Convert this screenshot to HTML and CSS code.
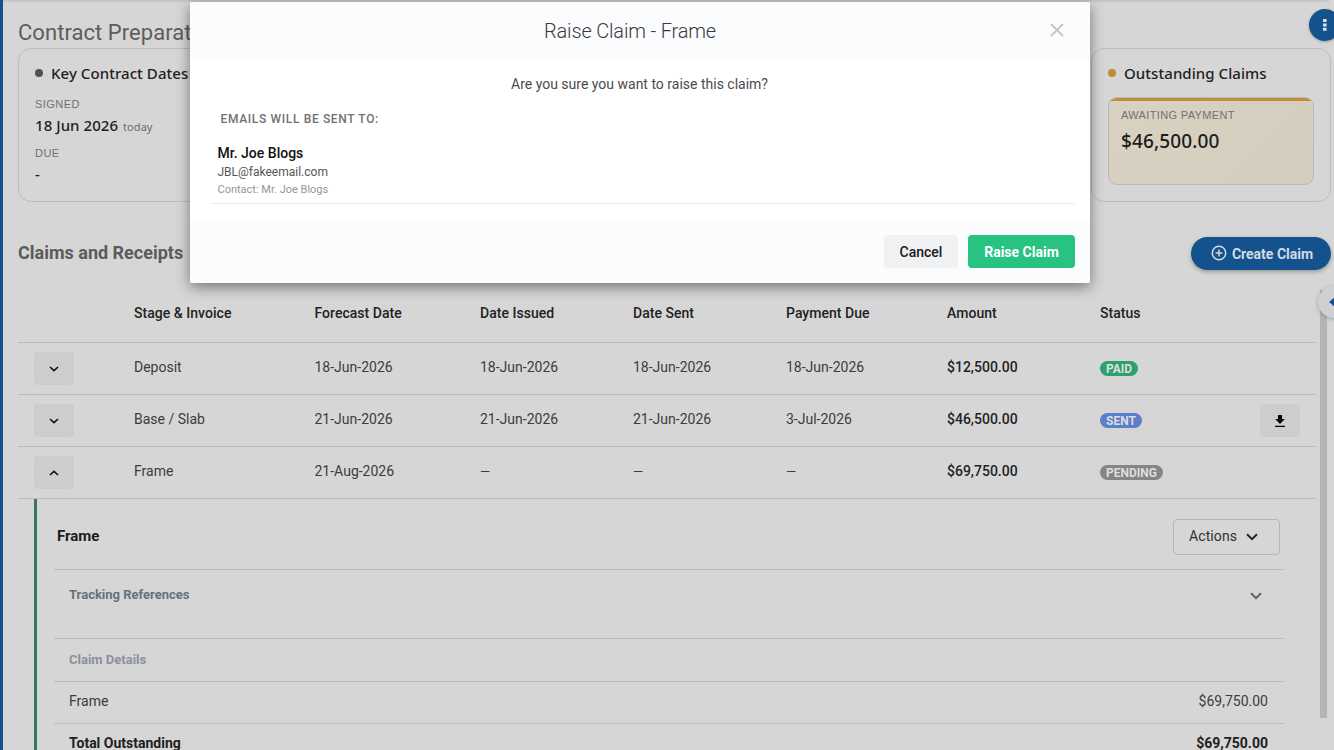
FILE: index.html
```html
<!DOCTYPE html>
<html lang="en">
<head>
<meta charset="utf-8">
<title>Raise Claim</title>
<link rel="stylesheet" href="styles.css">
</head>
<body>
<div class="page">
  <h1 class="page-title">Contract Preparation</h1>
  <section class="cards">
    <div class="card">
      <h2 class="card-title"><span class="dot dot-grey"></span>Key Contract Dates</h2>
      <div class="label">SIGNED</div>
      <div class="date">18 Jun 2026 <small>today</small></div>
      <div class="label label-due">DUE</div>
      <div class="date">-</div>
    </div>
    <div class="card"></div>
    <div class="card">
      <h2 class="card-title"><span class="dot dot-amber"></span>Outstanding Claims</h2>
      <div class="awaiting">
        <div class="label">AWAITING PAYMENT</div>
        <div class="total">$46,500.00</div>
      </div>
    </div>
  </section>

  <section class="claims-head">
    <h2>Claims and Receipts</h2>
    <button class="create"><svg width="16" height="16" viewBox="0 0 16 16" fill="none" stroke="currentColor" stroke-width="1.5"><circle cx="8" cy="8" r="6.7"/><path d="M8 4.6v6.8M4.6 8h6.8"/></svg>Create Claim</button>
  </section>

  <section class="table">
    <div class="row head"><span></span><span>Stage &amp; Invoice</span><span>Forecast Date</span><span>Date Issued</span><span>Date Sent</span><span>Payment Due</span><span>Amount</span><span>Status</span><span></span></div>
    <div class="row"><button class="square"><svg width="10" height="6" viewBox="0 0 10 6"><path d="M1 1l4 3.6L9 1"/></svg></button><span>Deposit</span><span>18-Jun-2026</span><span>18-Jun-2026</span><span>18-Jun-2026</span><span>18-Jun-2026</span><span class="amount">$12,500.00</span><span class="badge paid">PAID</span><span></span></div>
    <div class="row"><button class="square"><svg width="10" height="6" viewBox="0 0 10 6"><path d="M1 1l4 3.6L9 1"/></svg></button><span>Base / Slab</span><span>21-Jun-2026</span><span>21-Jun-2026</span><span>21-Jun-2026</span><span>3-Jul-2026</span><span class="amount">$46,500.00</span><span class="badge sent">SENT</span><button class="square download"><svg width="10" height="12" viewBox="0 0 10 12"><path d="M3 0h4v4h2.8L5 9 .2 4H3zM0 10.8h10V12H0z"/></svg></button></div>
    <div class="row"><button class="square"><svg width="10" height="6" viewBox="0 0 10 6"><path d="M1 5l4-3.6L9 5"/></svg></button><span>Frame</span><span>21-Aug-2026</span><span class="dash">—</span><span class="dash">—</span><span class="dash">—</span><span class="amount">$69,750.00</span><span class="badge pending">PENDING</span><span></span></div>
  </section>

  <section class="detail">
    <div class="detail-head"><h3>Frame</h3><button class="actions">Actions<svg width="12" height="8" viewBox="0 0 12 8"><path d="M1 1.2l5 5 5-5"/></svg></button></div>
    <div class="line tracking"><span>Tracking References</span><svg width="12" height="8" viewBox="0 0 12 8"><path d="M1 1.2l5 5 5-5"/></svg></div>
    <div class="line subhead">Claim Details</div>
    <div class="line item"><span>Frame</span><span>$69,750.00</span></div>
    <div class="line item sum"><span>Total Outstanding</span><span>$69,750.00</span></div>
  </section>

  <div class="top-shade"></div>
  <div class="scrollbar"></div>
  <button class="more"><svg width="4" height="12" viewBox="0 0 4 12"><path d="M0 0h3.6v3H0zM0 4.4h3.6v3H0zM0 8.8h3.6v3H0z"/></svg></button>
  <button class="drawer"><svg width="10" height="12" viewBox="0 0 10 12"><path d="M0 6l6-5v3h4v4H6v3z"/></svg></button>
</div>

<div class="modal" role="dialog">
  <header class="modal-head"><h2>Raise Claim - Frame</h2><svg class="close" width="14" height="14" viewBox="0 0 14 14"><path d="M1 1l12 12M13 1L1 13"/></svg></header>
  <div class="modal-body">
    <p class="question">Are you sure you want to raise this claim?</p>
    <div class="emails-title">EMAILS WILL BE SENT TO:</div>
    <div class="recipient">
      <div class="name">Mr. Joe Blogs</div>
      <div class="email">JBL@fakeemail.com</div>
      <div class="contact">Contact: Mr. Joe Blogs</div>
    </div>
  </div>
  <footer class="modal-foot"><button class="cancel">Cancel</button><button class="raise">Raise Claim</button></footer>
</div>
</body>
</html>
```

FILE: styles.css
```css
* { box-sizing: border-box; }
body { margin: 0; font-family: Roboto, sans-serif; font-size: 14px; color: #3c3c3e; background: #d6d6d6; overflow: hidden; }
h1, h2, h3, p { margin: 0; }
button { font-family: inherit; border: 0; padding: 0; }
svg { display: block; flex: none; }

.page { position: relative; height: 750px; overflow: hidden; padding: 16px 0 0 15px; border-left: 3px solid #14528e; }
.page-title { height: 32px; line-height: 34px; font-size: 22px; font-weight: 400; color: #5d5d5d; letter-spacing: .05px; }

.cards { display: grid; grid-template-columns: 524px 523px 240px; gap: 13px; height: 154px; width: 1313px; }
.card { border: 1px solid #bcbcbe; border-radius: 13px; padding: 12px 16px; }
.card-title { display: flex; align-items: center; gap: 8px; height: 24px; font: 500 15px/24px "Noto Sans", sans-serif; letter-spacing: .06px; color: #1f2022; white-space: nowrap; }
.dot { width: 8px; height: 8px; border-radius: 50%; }
.dot-grey { background: #505052; }
.dot-amber { background: #c48a30; }
.label { font: 400 11px/14px "Liberation Sans", sans-serif; letter-spacing: .35px; color: #707072; }
.card > .label { margin-top: 12px; letter-spacing: .45px; }
.card > .label-due { margin-top: 10px; }
.date { margin-top: 3px; height: 22px; font: 500 15px/22px "Noto Sans", sans-serif; letter-spacing: .06px; color: #1f2022; }
.date small { font-size: 11px; font-weight: 400; color: #6c6c6e; margin-left: 1px; }
.awaiting { position: relative; overflow: hidden; margin-top: 12px; height: 88px; padding: 10px 12px; border: 1px solid #bcbab5; border-radius: 9px; background: linear-gradient(135deg, #d9d1c2, #d4cebf); }
.awaiting::before { content: ""; position: absolute; top: -1px; left: 0; right: 0; height: 4px; background: #c08d3c; }
.total { margin-top: 6px; font: 500 19px/27px "Noto Sans", sans-serif; letter-spacing: .13px; color: #1c1c1d; }

.claims-head { display: flex; justify-content: space-between; align-items: center; width: 1313px; height: 33px; margin-top: 35px; }
.claims-head h2 { font-size: 18px; line-height: 32px; padding-bottom: 2px; font-weight: 700; color: #5b5b5b; }
.create { display: flex; align-items: center; justify-content: center; gap: 5px; width: 140px; height: 33px; padding-left: 2px; border-radius: 17px; background: #14528e; color: #d5dbe2; font-size: 14px; font-weight: 700; box-shadow: 0 2px 4px rgba(0,0,0,.28); }
.create svg { margin-bottom: 2px; }

.table { width: 1298px; margin-top: 14px; }
.row { display: grid; grid-template-columns: 116px 180.5px 165.5px 153px 153px 161px 153px 126px 1fr; align-items: center; height: 52px; padding-bottom: 3px; border-bottom: 1px solid #bcbcbe; }
.head { height: 59px; padding-bottom: 0; font-weight: 500; letter-spacing: .03px; color: #222224; }
.square { display: flex; align-items: center; justify-content: center; width: 40px; height: 33px; margin: 3px 0 0 16px; border-radius: 3px; background: #cdcdce; }
.square path { fill: none; stroke: #111; stroke-width: 1.6; }
.square.download { margin-left: 34px; }
.download path { fill: #050505; stroke: none; }
.amount { font-weight: 500; color: #222224; }
.dash { font-size: 13px; }
.badge { justify-self: start; height: 15px; margin-top: 3px; padding: 0 6px; border-radius: 8px; font-size: 12px; line-height: 16px; font-weight: 700; color: #dcdedf; }
.paid { background: #2aa16f; }
.sent { background: #5c7fca; }
.pending { background: #858585; }

.detail { width: 1250px; height: 260px; margin-left: 16px; padding-left: 17px; border-left: 3px solid #367660; }
.detail-head { display: flex; justify-content: space-between; align-items: center; height: 70px; padding: 5px 4px 0 3px; }
.detail-head h3 { font-size: 15px; line-height: 18px; padding-bottom: 1px; font-weight: 700; color: #1c1c1e; }
.actions { display: flex; align-items: center; gap: 9px; width: 107px; height: 36px; padding: 0 0 1px 15px; border: 1px solid #b5b5b8; border-radius: 4px; background: transparent; color: #303032; font-size: 14px; letter-spacing: .1px; }
.actions path, .tracking path { fill: none; stroke: #242426; stroke-width: 2; }
.actions svg { margin-top: 2px; }
.tracking path { stroke: #586370; }
.line { border-top: 1px solid #bcbcbe; padding: 0 16px 0 15px; }
.tracking { display: flex; justify-content: space-between; align-items: flex-start; height: 69px; padding-top: 17px; padding-right: 22px; font-size: 13px; line-height: 15px; font-weight: 700; color: #66717f; }
.tracking svg { margin-top: 5px; }
.subhead { height: 43px; line-height: 41px; font-size: 13px; font-weight: 700; color: #8b919c; }
.item { display: flex; justify-content: space-between; height: 42px; line-height: 38px; }
.sum { font-weight: 700; color: #202022; }

.top-shade { position: absolute; top: 0; left: 0; right: 5px; height: 3px; background: linear-gradient(#bfbfbf, #d6d6d6); }
.scrollbar { position: absolute; left: 1317px; top: 290px; width: 7px; height: 428px; background: #b4b4b5; }
.more { position: absolute; left: 1306px; top: 9px; width: 32px; height: 32px; border-radius: 50%; background: #14528e; display: flex; align-items: center; justify-content: center; box-shadow: 0 1px 3px rgba(0,0,0,.25); }
.more path { fill: #dbe2e9; }
.drawer { position: absolute; left: 1315px; top: 286px; width: 32px; height: 32px; border-radius: 50%; background: #cfd0d3; display: flex; align-items: center; padding-left: 11px; box-shadow: 0 1px 4px rgba(0,0,0,.25); }
.drawer path { fill: #14528e; }

.modal { position: absolute; left: 190px; top: 2px; width: 900px; height: 281px; display: flex; flex-direction: column; border-radius: 2px; background: #fff; overflow: hidden; box-shadow: 0 4px 14px rgba(0,0,0,.45); }
.modal-head { position: relative; height: 58px; display: flex; align-items: center; justify-content: center; background: #fbfcfe; padding-right: 20px; }
.modal-head h2 { font-size: 20px; font-weight: 300; letter-spacing: -.18px; color: #39393c; }
.close { position: absolute; right: 26px; top: 21px; }
.close path { fill: none; stroke: #c6c6c6; stroke-width: 2; }
.modal-body { height: 160px; padding: 14px 15px 0 20px; }
.question { padding-right: 6px; text-align: center; line-height: 20px; color: #4b4b4d; }
.emails-title { margin: 17px 0 0 10.5px; font-size: 12px; line-height: 16px; font-weight: 500; letter-spacing: .65px; color: #717173; }
.recipient { margin-top: 16px; height: 61px; padding: 0 7.5px; border-bottom: 1px solid #ebecee; }
.name { font-size: 14px; line-height: 20px; font-weight: 500; color: #111; }
.email { font-size: 12px; line-height: 18px; color: #555; }
.contact { font-size: 11px; line-height: 17px; color: #969698; }
.modal-foot { height: 63px; display: flex; justify-content: flex-end; gap: 10px; padding: 15px 15px 0; background: #fbfcfe; }
.cancel, .raise { height: 33px; border-radius: 4px; font-size: 14px; font-weight: 500; }
.cancel { width: 74px; background: #f0f1f3; color: #19191b; }
.raise { width: 107px; background: #28c281; color: #fff; font-weight: 700; }
```
